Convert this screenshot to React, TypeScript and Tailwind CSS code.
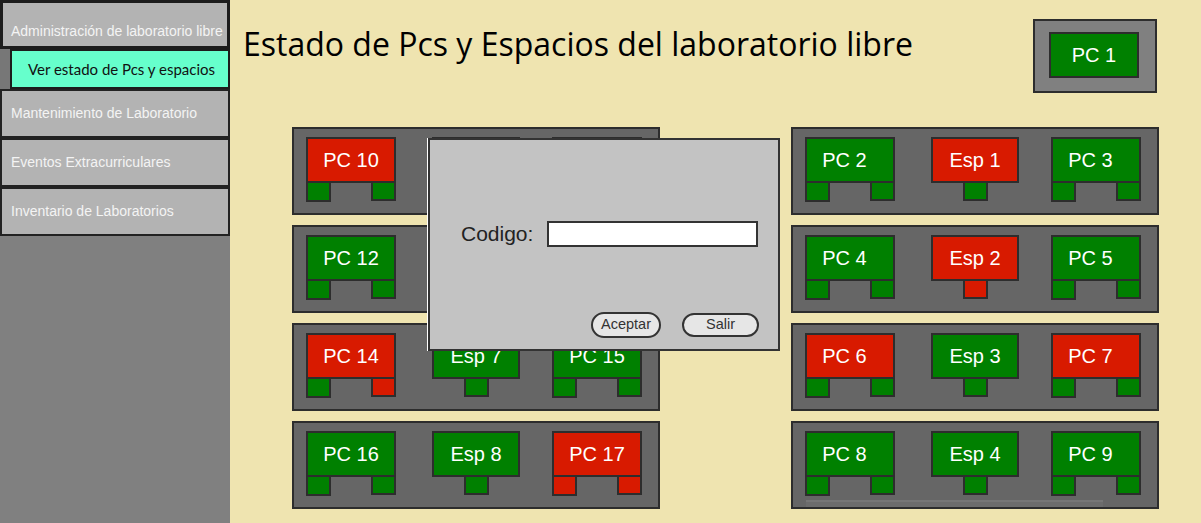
import React from 'react';

type Seat = { label: string; color: 'g' | 'r'; feet: ('g' | 'r')[] };

const fill = (c: 'g' | 'r') => (c === 'g' ? 'bg-[#008000]' : 'bg-[#d81a00]');

// A desk: label box plus small chair squares under it
function Desk({ seat, wide, shift }: { seat: Seat; wide: boolean; shift?: boolean }) {
  const isEsp = seat.feet.length === 1;
  return (
    <div className={wide ? 'w-[90px]' : 'w-[88px]'}>
      <div
        className={`h-[46px] border-2 border-[#2d2d2d] ${fill(seat.color)} flex items-center justify-center text-white text-[20px] leading-none ${shift ? 'pr-[11px]' : ''}`}
      >
        {seat.label}
      </div>
      {isEsp ? (
        <div className="flex justify-center">
          <div className={`w-[25px] h-[20px] -mt-[2px] border-2 border-[#2d2d2d] ${fill(seat.feet[0])}`} />
        </div>
      ) : (
        <div className="flex justify-between">
          <div className={`w-[25px] h-[21px] -mt-[2px] border-2 border-[#2d2d2d] ${fill(seat.feet[0])}`} />
          <div className={`w-[25px] h-[20px] -mt-[2px] border-2 border-[#2d2d2d] ${fill(seat.feet[1])}`} />
        </div>
      )}
    </div>
  );
}

function Group({ seats, right, scroll }: { seats: Seat[]; right?: boolean; scroll?: boolean }) {
  return (
    <div className="relative h-[88px] border-2 border-[#2d2d2d] bg-[#666666] pl-[12px] pt-[8px] flex items-start">
      <Desk seat={seats[0]} wide shift={right} />
      <div className="ml-[36px]">
        <Desk seat={seats[1]} wide={false} />
      </div>
      <div className="ml-[32px]">
        <Desk seat={seats[2]} wide shift={right} />
      </div>
      {scroll && (
        <div className="absolute left-[13px] bottom-0 w-[297px] h-[7px] border-t-2 border-[#767676] bg-[#6c6c6c]" />
      )}
    </div>
  );
}

const s = (label: string, color: 'g' | 'r', ...feet: ('g' | 'r')[]): Seat => ({ label, color, feet });

const leftGroups: Seat[][] = [
  [s('PC 10', 'r', 'g', 'g'), s('Esp 5', 'g', 'g'), s('PC 11', 'g', 'g', 'g')],
  [s('PC 12', 'g', 'g', 'g'), s('Esp 6', 'g', 'g'), s('PC 13', 'g', 'g', 'g')],
  [s('PC 14', 'r', 'g', 'r'), s('Esp 7', 'g', 'g'), s('PC 15', 'g', 'g', 'g')],
  [s('PC 16', 'g', 'g', 'g'), s('Esp 8', 'g', 'g'), s('PC 17', 'r', 'r', 'r')],
];

const rightGroups: Seat[][] = [
  [s('PC 2', 'g', 'g', 'g'), s('Esp 1', 'r', 'g'), s('PC 3', 'g', 'g', 'g')],
  [s('PC 4', 'g', 'g', 'g'), s('Esp 2', 'r', 'r'), s('PC 5', 'g', 'g', 'g')],
  [s('PC 6', 'r', 'g', 'g'), s('Esp 3', 'g', 'g'), s('PC 7', 'r', 'g', 'g')],
  [s('PC 8', 'g', 'g', 'g'), s('Esp 4', 'g', 'g'), s('PC 9', 'g', 'g', 'g')],
];

const menu = ['Mantenimiento de Laboratorio', 'Eventos Extracurriculares', 'Inventario de Laboratorios'];

export default function App() {
  return (
    <div
      className="flex h-screen w-full overflow-hidden bg-[#efe4b0]"
      style={{ fontFamily: '"Liberation Sans", Arial, sans-serif' }}
    >
      {/* Sidebar */}
      <aside className="w-[230px] shrink-0 bg-[#808080]">
        <div className="h-[49px] border-[3px] border-[#1c1c1c] bg-[#b3b3b3] flex items-center pl-[8px] pt-[13px] text-[14px] text-[#f4f4f4] whitespace-nowrap overflow-hidden">
          Administración de laboratorio libre
        </div>
        <div className="flex h-[40px] bg-[#777777]">
          <div className="ml-[10px] flex-1 border-2 border-[#1c1c1c] bg-[#66ffcc] flex items-center pl-[16px] text-[15px] text-[#111]" style={{ fontFamily: 'Lato, "Open Sans", sans-serif' }}>
            Ver estado de Pcs y espacios
          </div>
        </div>
        {menu.map((m) => (
          <div
            key={m}
            className="h-[49px] border-2 border-[#222] bg-[#b3b3b3] flex items-center pl-[9px] text-[14px] text-[#f4f4f4]"
          >
            {m}
          </div>
        ))}
      </aside>

      {/* Main */}
      <main className="relative flex-1">
        <div className="flex items-start justify-between pl-[13px] pr-[44px] pt-[19px]">
          <h1
            className="mt-[6px] text-[32px] leading-[38px] text-black whitespace-nowrap"
            style={{ fontFamily: '"Open Sans", Lato, sans-serif' }}
          >
            Estado de Pcs y Espacios del laboratorio libre
          </h1>
          <div className="w-[124px] h-[74px] border-2 border-[#2d2d2d] bg-[#808080] pt-[11px] pl-[14px]">
            <div className="w-[90px] h-[46px] border-2 border-[#2d2d2d] bg-[#008000] flex items-center justify-center text-white text-[20px]">
              PC 1
            </div>
          </div>
        </div>

        <div className="mt-[34px] ml-[62px] grid grid-cols-[368px_368px] gap-x-[131px] gap-y-[10px]">
          {leftGroups.map((g, i) => (
            <React.Fragment key={i}>
              <Group seats={g} />
              <Group seats={rightGroups[i]} right scroll={i === 3} />
            </React.Fragment>
          ))}
        </div>

        {/* Dialog */}
        <div className="absolute left-[198px] top-[138px] w-[352px] h-[213px] border-2 border-[#333] border-l-0 bg-[#c3c3c3] shadow-[-1px_0_0_#ffffff]">
          <div className="absolute inset-y-0 left-0 w-[2px] bg-[#333]" />
          <div className="flex items-center mt-[78px] ml-[33px]">
            <span className="text-[21px] text-[#222]">Codigo:</span>
            <input className="ml-[14px] w-[211px] h-[26px] border-2 border-[#333] bg-white outline-none" />
          </div>
          <div className="flex justify-end items-start gap-[21px] mt-[62px] mr-[19px]">
            <button className="w-[70px] h-[26px] rounded-full border-2 border-[#333] bg-[#e6e6e6] text-[14.5px] text-[#333] leading-none">
              Aceptar
            </button>
            <button className="mt-[1px] w-[77px] h-[24px] rounded-full border-2 border-[#333] bg-[#e6e6e6] text-[14.5px] text-[#333] leading-none">
              Salir
            </button>
          </div>
        </div>
      </main>
    </div>
  );
}
